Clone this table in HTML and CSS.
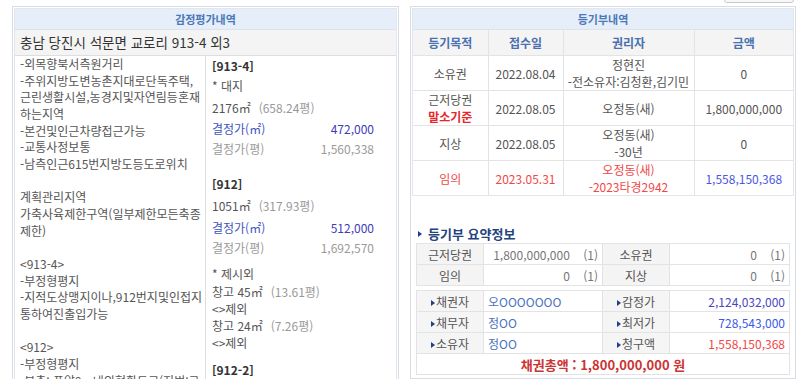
FILE: index.html
```html
<!DOCTYPE html>
<html lang="ko">
<head>
<meta charset="utf-8">
<title>감정평가 / 등기부</title>
<link rel="stylesheet" href="styles.css">
</head>
<body>
<div class="topbar"><button class="topbtn" type="button" aria-label="목록"></button></div>
<div class="wrap">
  <section class="panel left">
    <div class="inner">
      <div class="phead">감정평가내역</div>
      <div class="addr">충남 당진시 석문면 교로리 913-4 외3</div>
      <div class="lbody">
        <div class="desc">
          <div>-외목향북서측원거리</div>
          <div>-주위지방도변농촌지대로단독주택,</div>
          <div>근린생활시설,농경지및자연림등혼재</div>
          <div>하는지역</div>
          <div>-본건및인근차량접근가능</div>
          <div>-교통사정보통</div>
          <div>-남측인근615번지방도등도로위치</div>
          <div>&nbsp;</div>
          <div>계획관리지역</div>
          <div>가축사육제한구역(일부제한모든축종</div>
          <div>제한)</div>
          <div>&nbsp;</div>
          <div>&lt;913-4&gt;</div>
          <div>-부정형평지</div>
          <div>-지적도상맹지이나,912번지및인접지</div>
          <div>통하여진출입가능</div>
          <div>&nbsp;</div>
          <div>&lt;912&gt;</div>
          <div>-부정형평지</div>
          <div>-북측: 폭약9m내외현황도로(지번:그</div>
        </div>
        <div class="lots">
          <div class="lot h18">[913-4]</div>
          <div class="ln h22">* 대지</div>
          <div class="ln h22">2176㎡ <span class="py">(658.24평)</span></div>
          <div class="ln h20 price"><span>결정가(㎡)</span><span>472,000</span></div>
          <div class="ln h20 price gray"><span>결정가(평)</span><span>1,560,338</span></div>
          <div class="lot h20 gap15">[912]</div>
          <div class="ln h24">1051㎡ <span class="py">(317.93평)</span></div>
          <div class="ln h20 price"><span>결정가(㎡)</span><span>512,000</span></div>
          <div class="ln h20 price gray"><span>결정가(평)</span><span>1,692,570</span></div>
          <div class="ln h17 gap8">* 제시외</div>
          <div class="ln h18">창고 45㎡ <span class="py">(13.61평)</span></div>
          <div class="ln h17">&lt;&gt;제외</div>
          <div class="ln h17">창고 24㎡ <span class="py">(7.26평)</span></div>
          <div class="ln h17">&lt;&gt;제외</div>
          <div class="lot h18 gap9">[912-2]</div>
        </div>
      </div>
    </div>
  </section>
  <section class="panel right">
    <div class="inner">
      <div class="phead">등기부내역</div>
      <table class="reg">
        <colgroup><col class="c1"><col class="c2"><col class="c3"><col class="c4"></colgroup>
        <thead>
          <tr><th>등기목적</th><th>접수일</th><th>권리자</th><th>금액</th></tr>
        </thead>
        <tbody>
          <tr><td>소유권</td><td>2022.08.04</td><td>정현진<br>-전소유자:김청환,김기민</td><td>0</td></tr>
          <tr><td>근저당권<br><b class="base">말소기준</b></td><td>2022.08.05</td><td>오정동(새)</td><td>1,800,000,000</td></tr>
          <tr><td>지상</td><td>2022.08.05</td><td>오정동(새)<br>-30년</td><td>0</td></tr>
          <tr class="red"><td>임의</td><td>2023.05.31</td><td>오정동(새)<br>-2023타경2942</td><td class="amt">1,558,150,368</td></tr>
        </tbody>
      </table>
    </div>
    <h3 class="sumtitle"><span class="tri"></span>등기부 요약정보</h3>
    <table class="sum">
      <colgroup><col class="s1"><col class="s2"><col class="s3"><col class="s4"></colgroup>
      <tr><th>근저당권</th><td class="num">1,800,000,000 <span class="cnt">(1)</span></td><th>소유권</th><td class="num">0 <span class="cnt">(1)</span></td></tr>
      <tr><th>임의</th><td class="num">0 <span class="cnt">(1)</span></td><th>지상</th><td class="num">0 <span class="cnt">(1)</span></td></tr>
    </table>
    <table class="sum sum2">
      <colgroup><col class="s1"><col class="s2"><col class="s3"><col class="s4"></colgroup>
      <tr><th><span class="mk"></span>채권자</th><td class="nm">오OOOOOOO</td><th><span class="mk"></span>감정가</th><td class="num v1">2,124,032,000</td></tr>
      <tr><th><span class="mk"></span>채무자</th><td class="nm">정OO</td><th><span class="mk"></span>최저가</th><td class="num v2">728,543,000</td></tr>
      <tr><th><span class="mk"></span>소유자</th><td class="nm">정OO</td><th><span class="mk"></span>청구액</th><td class="num v3">1,558,150,368</td></tr>
      <tr><td class="total" colspan="4">채권총액 : 1,800,000,000 원</td></tr>
    </table>
  </section>
</div>
</body>
</html>
```

FILE: styles.css
```css
html, body {
  margin: 0;
  padding: 0;
  background: #fff;
}
body {
  font-family: "Noto Sans CJK KR", "Noto Sans", sans-serif;
  font-size: 12px;
  color: #555;
}
.topbar {
  height: 3px;
  display: flex;
  justify-content: flex-end;
  align-items: flex-end;
  overflow: hidden;
  padding-right: 6px;
}
.topbtn {
  flex: none;
  width: 70px;
  height: 20px;
  border: 1px solid #c9c9c9;
  border-radius: 3px;
  background: #f8f8f8;
}
.wrap {
  display: flex;
  align-items: flex-start;
  gap: 11px;
  padding-left: 12px;
  margin-top: 3px;
}
.panel {
  box-sizing: border-box;
  border: 1px solid #d6dde6;
  padding: 1px;
}
.left { width: 387px; }
.right { width: 386px; padding-bottom: 3px; }
.inner {
  border: 1px solid #e3e6ea;
}
.phead {
  height: 20px;
  line-height: 20px;
  background: #e5eef9;
  text-align: center;
  font-weight: bold;
  font-size: 11px;
  color: #4a78b8;
  border-bottom: 1px solid #dde3ea;
}
.addr {
  height: 25px;
  line-height: 25px;
  background: #f4f4f4;
  font-size: 13.5px;
  color: #333;
  padding-left: 5px;
  border-bottom: 1px solid #dedede;
}
.lbody {
  display: grid;
  grid-template-columns: 191px 1fr;
}
.desc {
  padding-left: 5px;
  line-height: 16.67px;
  white-space: nowrap;
  border-right: 1px solid #dedede;
  overflow: hidden;
}
.lots {
  padding: 0 22px 0 6px;
  white-space: nowrap;
}
.lot { color: #333; font-weight: 600; }
.ln, .lot { display: flex; align-items: center; }
.ln .py { color: #999; margin-left: 8px; }
.price { justify-content: space-between; color: #3d55c0; }
.price span:last-child { color: #3d3db8; }
.price.gray, .price.gray span:last-child { color: #9a9a9a; }
.h17 { height: 17px; }
.h18 { height: 18px; }
.h20 { height: 20px; }
.h22 { height: 22px; }
.h24 { height: 24px; }
.gap8 { margin-top: 8px; }
.gap9 { margin-top: 9px; }
.gap15 { margin-top: 15px; }

.reg {
  width: 100%;
  border-collapse: collapse;
  table-layout: fixed;
}
.reg .c1 { width: 75px; }
.reg .c2 { width: 75px; }
.reg .c3 { width: 131px; }
.reg th {
  height: 25px;
  background: #f4f4f4;
  color: #4a70b0;
  font-weight: bold;
  font-size: 12px;
  border-left: 1px solid #e3e3e3;
  border-bottom: 1px solid #e3e3e3;
  padding: 0;
}
.reg td {
  height: 33px;
  padding: 0;
  text-align: center;
  line-height: 17px;
  border-left: 1px solid #e3e3e3;
  border-bottom: 1px solid #e3e3e3;
  white-space: nowrap;
}
.reg th:first-child, .reg td:first-child { border-left: none; }
.reg tr:last-child td { border-bottom: none; }
.base { color: #e8262a; font-weight: bold; }
.reg .red td { color: #f04848; }
.reg .red td.amt { color: #4a58e0; }

.sumtitle {
  margin: 29px 0 0 6px;
  height: 18px;
  line-height: 18px;
  font-size: 13px;
  font-weight: bold;
  color: #23437f;
  display: flex;
  align-items: center;
}
.tri {
  width: 0;
  height: 0;
  border-top: 3px solid transparent;
  border-bottom: 3px solid transparent;
  border-left: 4px solid #1f3f86;
  margin-right: 6px;
}
.sum {
  width: 374px;
  margin: 0 0 0 4px;
  border-collapse: collapse;
  table-layout: fixed;
  border: 1px solid #d9d9d9;
}
.sum .s1 { width: 67px; }
.sum .s2 { width: 119px; }
.sum .s3 { width: 67px; }
.sum th, .sum td {
  height: 20px;
  padding: 0 4px;
  border: 1px solid #e3e3e3;
  font-weight: normal;
  white-space: nowrap;
}
.sum th {
  background: #f4f4f4;
  color: #555;
  text-align: center;
  font-size: 12px;
}
.sum td.num { text-align: right; color: #777; }
.sum .cnt { margin-left: 10px; }
.sum2 { margin-top: 4px; }
.sum2 th { background: #f5f5f5; }
.mk {
  display: inline-block;
  width: 0;
  height: 0;
  border-top: 3px solid transparent;
  border-bottom: 3px solid transparent;
  border-left: 4px solid #1f3f86;
  margin-right: 1px;
  vertical-align: 1px;
}
.sum td.nm { color: #4a72c0; text-align: left; padding-left: 4px; }
.sum td.v1 { color: #4848c0; }
.sum td.v2 { color: #3b5ae8; }
.sum td.v3 { color: #f04848; }
.sum td.total {
  text-align: center;
  color: #cc3333;
  font-weight: bold;
  font-size: 13px;
  background: #fff;
}
```
